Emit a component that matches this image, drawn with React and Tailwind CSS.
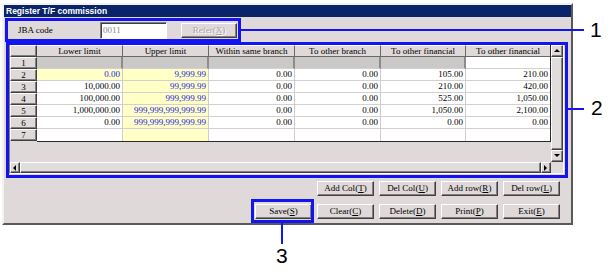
import React from "react";

const raised =
  "border border-t-white border-l-white border-r-[#404040] border-b-[#404040] shadow-[inset_-1px_-1px_0_#808080]";

const cols = [
  { label: "Lower limit", w: "w-[86px]" },
  { label: "Upper limit", w: "w-[86px]" },
  { label: "Within same branch", w: "w-[86px]" },
  { label: "To other branch", w: "w-[86px]" },
  { label: "To other financial", w: "w-[85px]" },
  { label: "To other financial", w: "w-[84px]" },
];

const rows = [
  ["", "", "", "", "", ""],
  ["0.00", "9,999.99", "0.00", "0.00", "105.00", "210.00"],
  ["10,000.00", "99,999.99", "0.00", "0.00", "210.00", "420.00"],
  ["100,000.00", "999,999.99", "0.00", "0.00", "525.00", "1,050.00"],
  ["1,000,000.00", "999,999,999,999.99", "0.00", "0.00", "1,050.00", "2,100.00"],
  ["0.00", "999,999,999,999.99", "0.00", "0.00", "0.00", "0.00"],
  ["", "", "", "", "", ""],
];

function Btn({ label, m, rest, disabled, w = "w-[57px]" }) {
  return (
    <div
      className={`${w} h-[15px] ${raised} bg-[#dfd9d9] flex items-center justify-center text-[9px] leading-none ${
        disabled ? "text-[#a9a5a5] [text-shadow:1px_1px_0_#ffffff]" : "text-black"
      }`}
    >
      <span>
        {label}(<span className="underline">{m}</span>){rest}
      </span>
    </div>
  );
}

function Arrow({ dir }) {
  const pts = {
    up: "1,5 4,2 7,5",
    down: "1,2 4,5 7,2",
    left: "5,1 2,4 5,7",
    right: "2,1 5,4 2,7",
  }[dir];
  return (
    <svg width="8" height="8" viewBox="0 0 8 8">
      <polygon points={pts} fill="#000" />
    </svg>
  );
}

function Cell({ r, c, v }) {
  const w = cols[c].w;
  if (r === 0) {
    const gray = c < 5;
    return (
      <div
        className={`${w} h-[12px] ${
          gray ? "bg-[#cbc8c8] border-r-2 border-r-[#8e8b8b]" : "bg-white"
        } border-b border-b-[#d2d0d0]`}
      />
    );
  }
  const yellow = c === 1 || (c === 0 && r === 1);
  const blue = yellow;
  return (
    <div
      className={`${w} h-[12px] flex items-center justify-end pr-[2px] text-[9px] leading-none ${
        yellow ? "bg-[#ffffc6]" : "bg-white"
      } ${blue ? "text-[#1c1ce6]" : "text-black"} ${
        c < 5 ? "border-r border-r-[#cfcccc]" : ""
      } ${r < 6 ? "border-b border-b-[#d2d0d0]" : ""}`}
    >
      {v}
    </div>
  );
}

export default function App() {
  return (
    <div className="relative w-[616px] h-[274px] bg-white pl-[2px] pt-[3px] font-['Liberation_Serif',serif] overflow-hidden">
      {/* Window */}
      <div className="w-[571px] h-[222px] bg-[#dfd9d9] border-l-2 border-t-2 border-l-[#f4f2f2] border-t-[#f4f2f2] border-r-2 border-b-2 border-r-[#5a5858] border-b-[#5a5858] flex flex-col">
        <div className="h-[12px] bg-[#0a246a] flex items-center pl-[2px]">
          <span className="text-white font-bold text-[8.5px] leading-none font-['Liberation_Sans',Arial,sans-serif]">
            Register T/F commission
          </span>
        </div>

        {/* JBA row */}
        <div className="h-[24px] mt-[1px] flex items-center pl-[14px]">
          <div className="w-[82px] text-[9px] leading-none">JBA code</div>
          <div className="w-[67px] h-[17px] bg-white border border-t-[#808080] border-l-[#808080] border-b-white border-r-white shadow-[inset_1px_1px_0_#404040] flex items-center pl-[2px] text-[9px] leading-none text-[#8a8888]">
            0011
          </div>
          <div className="ml-[14px]">
            <Btn label="Refer" m="X" disabled w="w-[56px]" />
          </div>
        </div>

        {/* Grid panel */}
        <div className="mt-[2px] ml-[5px] w-[555px] h-[130px] border border-t-[#808080] border-l-[#808080] border-b-white border-r-white flex flex-col">
          <div className="h-[117px] flex">
            {/* table area */}
            <div className="w-[541px] flex items-start">
              {/* row header column */}
              <div className="w-[27px] flex flex-col">
                <div className={`h-[12px] ${raised} bg-[#dfd9d9]`} />
                {rows.map((_, i) => (
                  <div
                    key={i}
                    className={`h-[12px] ${raised} bg-[#dfd9d9] flex items-center justify-center text-[9px] leading-none`}
                  >
                    {i + 1}
                  </div>
                ))}
              </div>
              {/* data block */}
              <div className="flex flex-col border-r border-b border-r-[#2a2a2a] border-b-[#2a2a2a]">
                <div className="flex h-[12px]">
                  {cols.map((c, i) => (
                    <div
                      key={i}
                      className={`${c.w} h-[12px] bg-[#dfd9d9] border-b border-b-[#6a6868] ${
                        i < 5 ? "border-r border-r-[#6a6868]" : ""
                      } border-t border-t-white flex items-center justify-center text-[9px] leading-none`}
                    >
                      {c.label}
                    </div>
                  ))}
                </div>
                {rows.map((r, ri) => (
                  <div key={ri} className="flex">
                    {r.map((v, ci) => (
                      <Cell key={ci} r={ri} c={ci} v={v} />
                    ))}
                  </div>
                ))}
              </div>
            </div>
            {/* vertical scrollbar */}
            <div className="w-[12px] flex flex-col bg-[#eeeaea]">
              <div className={`h-[12px] ${raised} bg-[#dfd9d9] flex items-center justify-center`}>
                <Arrow dir="up" />
              </div>
              <div className={`flex-1 ${raised} bg-[#e2dddd]`} />
              <div className={`h-[12px] ${raised} bg-[#dfd9d9] flex items-center justify-center`}>
                <Arrow dir="down" />
              </div>
            </div>
          </div>
          {/* horizontal scrollbar */}
          <div className="h-[11px] flex">
            <div className={`w-[10px] ${raised} bg-[#dfd9d9] flex items-center justify-center`}>
              <Arrow dir="left" />
            </div>
            <div className={`flex-1 ${raised} bg-[#e2dddd]`} />
            <div className={`w-[10px] ${raised} bg-[#dfd9d9] flex items-center justify-center`}>
              <Arrow dir="right" />
            </div>
            <div className="w-[12px] bg-[#dfd9d9]" />
          </div>
        </div>

        {/* Buttons */}
        <div className="mt-[7px] flex justify-end gap-[5px] pr-[11px]">
          <Btn label="Add Col" m="T" />
          <Btn label="Del Col" m="U" />
          <Btn label="Add row" m="R" />
          <Btn label="Del row" m="L" />
        </div>
        <div className="mt-[8px] flex justify-end gap-[5px] pr-[11px]">
          <Btn label="Save" m="S" />
          <Btn label="Clear" m="C" />
          <Btn label="Delete" m="D" />
          <Btn label="Print" m="P" />
          <Btn label="Exit" m="E" />
        </div>
      </div>

      {/* Annotations */}
      <div className="absolute left-[5px] top-[18px] w-[236px] h-[24px] border-[3px] border-[#1414f0]" />
      <div className="absolute left-[240px] top-[29px] w-[344px] h-[2px] bg-[#1414f0]" />
      <div className="absolute left-[590px] top-[19px] text-[21px] leading-none font-['Liberation_Sans',Arial,sans-serif] text-black">
        1
      </div>

      <div className="absolute left-[6px] top-[42px] w-[562px] h-[136px] border-[3px] border-[#1414f0]" />
      <div className="absolute left-[567px] top-[108px] w-[17px] h-[2px] bg-[#1414f0]" />
      <div className="absolute left-[591px] top-[97px] text-[21px] leading-none font-['Liberation_Sans',Arial,sans-serif] text-black">
        2
      </div>

      <div className="absolute left-[251px] top-[199px] w-[63px] h-[24px] border-[3px] border-[#1414f0]" />
      <div className="absolute left-[281px] top-[223px] w-[2px] h-[21px] bg-[#1414f0]" />
      <div className="absolute left-[276px] top-[245px] text-[21px] leading-none font-['Liberation_Sans',Arial,sans-serif] text-black">
        3
      </div>
    </div>
  );
}
